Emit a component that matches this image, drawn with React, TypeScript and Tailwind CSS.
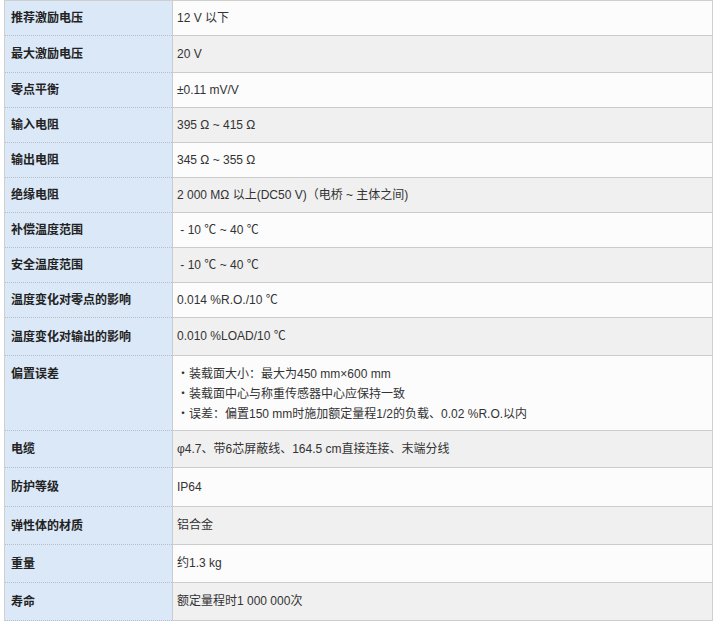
const rows: { label: string; value: string[]; h: string }[] = [
  { label: '推荐激励电压', value: ['12 V 以下'], h: 'h-[35px]' },
  { label: '最大激励电压', value: ['20 V'], h: 'h-[37px]' },
  { label: '零点平衡', value: ['±0.11 mV/V'], h: 'h-[35px]' },
  { label: '输入电阻', value: ['395 Ω ~ 415 Ω'], h: 'h-[35px]' },
  { label: '输出电阻', value: ['345 Ω ~ 355 Ω'], h: 'h-[35px]' },
  { label: '绝缘电阻', value: ['2 000 MΩ 以上(DC50 V)（电桥 ~ 主体之间)'], h: 'h-[35px]' },
  { label: '补偿温度范围', value: [' - 10 ℃ ~ 40 ℃'], h: 'h-[35px]' },
  { label: '安全温度范围', value: [' - 10 ℃ ~ 40 ℃'], h: 'h-[35px]' },
  { label: '温度变化对零点的影响', value: ['0.014 %R.O./10 ℃'], h: 'h-[35px]' },
  { label: '温度变化对输出的影响', value: ['0.010 %LOAD/10 ℃'], h: 'h-[38px]' },
  {
    label: '偏置误差',
    value: [
      '・装载面大小：最大为450 mm×600 mm',
      '・装载面中心与称重传感器中心应保持一致',
      '・误差：偏置150 mm时施加额定量程1/2的负载、0.02 %R.O.以内',
    ],
    h: 'h-[75px]',
  },
  { label: '电缆', value: ['φ4.7、带6芯屏蔽线、164.5 cm直接连接、末端分线'], h: 'h-[37px]' },
  { label: '防护等级', value: ['IP64'], h: 'h-[39px]' },
  { label: '弹性体的材质', value: ['铝合金'], h: 'h-[38px]' },
  { label: '重量', value: ['约1.3 kg'], h: 'h-[38px]' },
  { label: '寿命', value: ['额定量程时1 000 000次'], h: 'h-[38px]' },
]

export default function App() {
  return (
    <div className="min-h-[625px] bg-white pl-[4px] font-['Liberation_Sans','Noto_Sans_CJK_SC',sans-serif] text-[12px]">
      <div className="w-[709px] border-x border-t border-[#cfcfcf]">
        {rows.map((r, i) => {
          const multi = r.value.length > 1
          return (
            <div key={r.label} className={`grid grid-cols-[167px_1fr] ${r.h}`}>
              <div
                className={`flex border-b border-dotted border-[#b4bcc6] bg-[#dbe8f8] pl-[6px] font-bold text-[#222] ${
                  multi ? 'items-start pt-[9px]' : 'items-center'
                }`}
              >
                {r.label}
              </div>
              <div
                className={`flex flex-col border-b border-l border-[#cccccc] pl-[4px] text-[#333] ${
                  i % 2 === 0 ? 'bg-[#fcfcfc]' : 'bg-[#f0f0f0]'
                } ${multi ? 'justify-start gap-[1px] pt-[9px]' : 'justify-center'}`}
              >
                {r.value.map((v) => (
                  <div key={v} className="whitespace-pre leading-[19px]">
                    {v}
                  </div>
                ))}
              </div>
            </div>
          )
        })}
      </div>
    </div>
  )
}
